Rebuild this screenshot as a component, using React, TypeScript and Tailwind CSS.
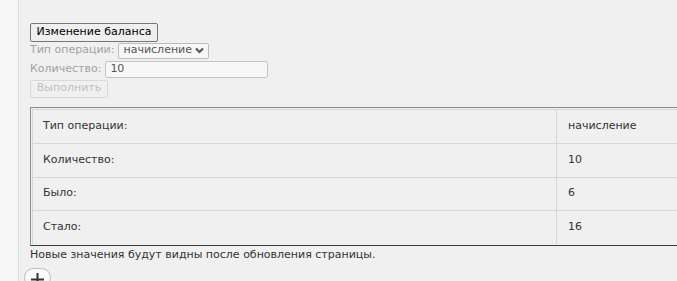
import React from "react";

const rows = [
  { label: "Тип операции:", value: "начисление", h: "h-[34px]" },
  { label: "Количество:", value: "10", h: "h-[34px]" },
  { label: "Было:", value: "6", h: "h-[33px]" },
  { label: "Стало:", value: "16", h: "h-[33px]" },
];

export default function App() {
  return (
    <div className="w-[677px] h-[281px] overflow-hidden bg-[#f0f0f0] flex font-['DejaVu_Sans',Verdana,sans-serif] text-[11px] text-[#333]">
      {/* left strip */}
      <div className="w-[19px] shrink-0 bg-[#f6f6f6] border-r border-[#dddddd]"></div>

      {/* main content */}
      <div className="pl-[11px] pt-[23px] flex flex-col items-start">
        <div className="w-[128px] h-[19px] flex items-center justify-center border border-[#767676] rounded-[2px] bg-[#efefef] text-black">
          Изменение баланса
        </div>

        <div className="flex items-center mt-[1px] h-[16px] text-[#a2a2a2]">
          <span>Тип операции:</span>
          <div className="ml-[4px] h-[16px] px-[4px] flex items-center gap-[3px] border border-[#bdbdbd] rounded-[2px] bg-[#f7f7f7] text-[#555]">
            <span>начисление</span>
            <svg width="9" height="7" viewBox="0 0 9 7">
              <path d="M1 1.5 L4.5 5 L8 1.5" stroke="#555" strokeWidth="2.2" fill="none" />
            </svg>
          </div>
        </div>

        <div className="flex items-center mt-[2px] h-[17px] text-[#a2a2a2]">
          <span>Количество:</span>
          <div className="ml-[4px] w-[163px] h-[17px] px-[4px] flex items-center border border-[#c4c4c4] rounded-[2px] bg-[#f7f7f7] text-[#555]">
            10
          </div>
        </div>

        <div className="mt-[2px] w-[78px] h-[18px] flex items-center justify-center border border-[#d9d9d9] rounded-[2px] bg-[#f0f0f0] text-[#c0c0c0]">
          Выполнить
        </div>

        {/* result table */}
        <div className="mt-[9px] w-[680px] border border-t-[#8c8c8c] border-l-[#8c8c8c] border-b-[#3c3c3c] border-r-[#3c3c3c] p-[1px]">
          <div className="border border-[#cfd9e3] border-b-0">
            {rows.map((r, i) => (
              <div
                key={r.label}
                className={`flex ${r.h} ${i < rows.length - 1 ? "border-b border-[#cfd9e3]" : ""}`}
              >
                <div className="w-[524px] shrink-0 pl-[10px] flex items-center border-r border-[#cfd9e3]">
                  {r.label}
                </div>
                <div className="pl-[11px] flex items-center">{r.value}</div>
              </div>
            ))}
          </div>
        </div>

        <p className="mt-[1px] leading-[16px] text-[#333]">
          Новые значения будут видны после обновления страницы.
        </p>

        <div className="mt-[5px] -ml-[6px] w-[27px] h-[27px] rounded-full border border-[#bcbcbc] bg-[#fafafa] flex items-start justify-center pt-[4px]">
          <svg width="13" height="13" viewBox="0 0 13 13">
            <path d="M6.5 0 V13 M0 6.5 H13" stroke="#333" strokeWidth="2" />
          </svg>
        </div>
      </div>
    </div>
  );
}
